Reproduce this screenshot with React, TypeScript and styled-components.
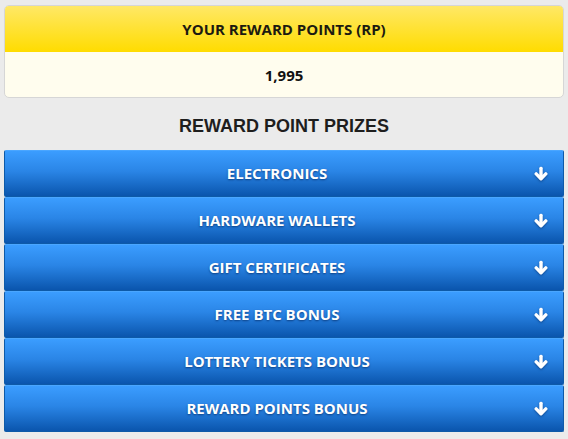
import React from 'react';
import styled, { createGlobalStyle } from 'styled-components';

const GlobalStyle = createGlobalStyle`
  html, body {
    margin: 0;
    padding: 0;
    background: #ebebeb;
  }
`;

const categories = [
    'ELECTRONICS',
    'HARDWARE WALLETS',
    'GIFT CERTIFICATES',
    'FREE BTC BONUS',
    'LOTTERY TICKETS BONUS',
    'REWARD POINTS BONUS',
];

const ArrowDown = () => (
    <svg width="14" height="15" viewBox="0 0 14 15">
        <path d="M7 1.8 V11.5" stroke="#fff" strokeWidth="3.4" strokeLinecap="round" fill="none" />
        <path d="M2.2 7.4 L7 12.2 L11.8 7.4" stroke="#fff" strokeWidth="3.4" strokeLinecap="round" strokeLinejoin="round" fill="none" />
    </svg>
);

export default function App() {
    return (
        <>
            <GlobalStyle />
            <Page>
                <PointsCard>
                    <PointsHeader>YOUR REWARD POINTS (RP)</PointsHeader>
                    <PointsValue>1,995</PointsValue>
                </PointsCard>
                <SectionTitle>REWARD POINT PRIZES</SectionTitle>
                <CategoryList>
                    {categories.map((name) => (
                        <CategoryButton key={name}>
                            <span>{name}</span>
                            <ArrowSlot>
                                <ArrowDown />
                            </ArrowSlot>
                        </CategoryButton>
                    ))}
                </CategoryList>
            </Page>
        </>
    );
}

const Page = styled.div`
  padding: 5px 4px 0 4px;
  font-family: 'Open Sans', 'Noto Sans', sans-serif;
`;

const PointsCard = styled.div`
  border: 1px solid #d6d6d6;
  border-radius: 5px;
  overflow: hidden;
  background: #fffdee;
`;

const PointsHeader = styled.div`
  height: 46px;
  display: flex;
  align-items: center;
  justify-content: center;
  background: linear-gradient(to bottom, #ffe866 0%, #ffdc00 100%);
  color: #1c1a10;
  font-weight: 700;
  font-size: 15px;
`;

const PointsValue = styled.div`
  height: 45px;
  display: flex;
  align-items: center;
  justify-content: center;
  color: #111;
  font-weight: 700;
  font-size: 15px;
`;

const SectionTitle = styled.div`
  height: 52px;
  display: flex;
  align-items: center;
  justify-content: center;
  font-family: 'Liberation Sans', Arial, sans-serif;
  font-weight: 700;
  font-size: 18px;
  color: #1e1e1e;
  padding-top: 5px;
  box-sizing: border-box;
`;

const CategoryList = styled.div`
  display: flex;
  flex-direction: column;
`;

const CategoryButton = styled.div`
  position: relative;
  height: 47px;
  box-sizing: border-box;
  display: flex;
  align-items: center;
  justify-content: center;
  padding: 0 14px 1px 0;
  border: 1px solid #0d5aa8;
  border-top-color: #4aa6ff;
  border-radius: 2px;
  background: linear-gradient(to bottom, #3b9dff 0%, #2a85e6 45%, #0a55ad 100%);
  color: #fff;
  font-weight: 700;
  font-size: 15px;
  text-shadow: 0 1px 2px rgba(0, 30, 80, 0.6);
`;

const ArrowSlot = styled.span`
  position: absolute;
  right: 15px;
  top: 50%;
  transform: translateY(-50%);
  display: flex;
  filter: drop-shadow(0 1px 1px rgba(0, 30, 80, 0.5));
`;
